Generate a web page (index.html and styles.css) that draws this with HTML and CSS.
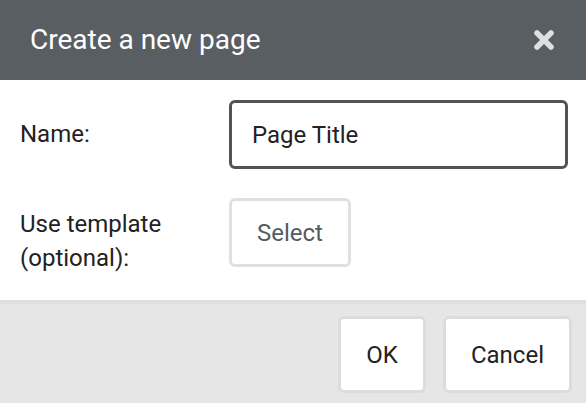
FILE: index.html
```html
<!DOCTYPE html>
<html lang="en">
<head>
  <meta charset="UTF-8">
  <meta name="viewport" content="width=device-width, initial-scale=1.0">
  <title>Create a new page</title>
  <link rel="stylesheet" href="styles.css">
</head>
<body>
  <div class="dialog">
    <header class="dialog-head">
      <h1>Create a new page</h1>
      <button class="close" aria-label="Close">
        <svg width="22" height="22" viewBox="0 0 22 22">
          <path d="M4 4 L18 18 M18 4 L4 18" stroke="#dfe0e1" stroke-width="5.5" stroke-linecap="round" fill="none"/>
        </svg>
      </button>
    </header>

    <div class="dialog-body">
      <label class="field-label name-label" for="pageName">Name:</label>
      <input class="text-input" type="text" id="pageName" value="Page Title">

      <label class="field-label template-label">Use template<br>(optional):</label>
      <div class="template-pick"><button class="btn btn-select">Select</button></div>
    </div>

    <footer class="dialog-foot">
      <button class="btn">OK</button>
      <button class="btn">Cancel</button>
    </footer>
  </div>
</body>
</html>
```

FILE: styles.css
```css
body { margin: 0; font-family: Roboto, "Liberation Sans", sans-serif; background: #fff; color: #222; overflow: hidden; }
.dialog { width: 586px; }
.dialog-head { background: #595e62; height: 80px; padding: 0 31px 0 30px; display: flex; justify-content: space-between; align-items: center; box-sizing: border-box; }
.dialog-head h1 { margin: 0; font-size: 28px; font-weight: 400; color: #fff; line-height: 1; }
.close { background: none; border: 0; padding: 0; display: flex; cursor: pointer; }
.dialog-body { display: grid; grid-template-columns: 209px 339px; row-gap: 29px; padding: 20px 18px 25px 20px; align-items: center; }
.field-label { font-size: 24px; line-height: 1.4; }
.template-label { align-self: start; margin-top: 10px; }
.template-pick { align-self: start; display: flex; }
.text-input { box-sizing: border-box; width: 339px; height: 69px; border: 3px solid #4f5458; border-radius: 6px; padding: 0 20px; font: 24px Roboto, "Liberation Sans", sans-serif; color: #222; outline: none; }
.btn { box-sizing: border-box; height: 77px; padding: 0 25px; background: #fff; border: 3px solid #dcdcdc; border-radius: 6px; font: 24px Roboto, "Liberation Sans", sans-serif; color: #222; cursor: pointer; }
.btn-select { height: 69px; border-color: #e0e0e0; color: #555b5f; }
.dialog-foot { background: #e6e6e6; border-top: 4px solid #dedede; padding: 12px 14px 10px; display: flex; justify-content: flex-end; gap: 17px; }
```
